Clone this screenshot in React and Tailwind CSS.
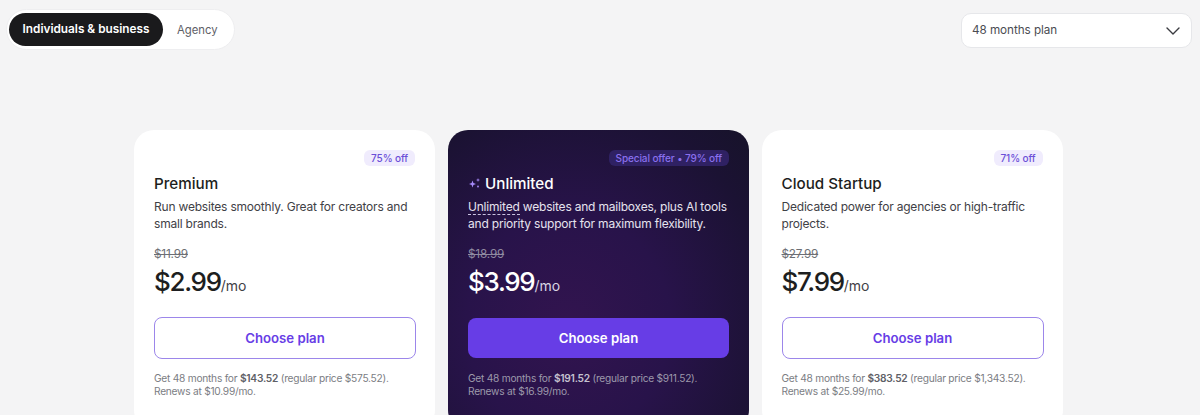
import React from "react";
import { ChevronDown } from "lucide-react";

const plans = [
  { name: "Premium", badge: "75% off", desc: "Run websites smoothly. Great for creators and small brands.", old: "$11.99", price: "$2.99", total: "$143.52", regular: "$575.52", renew: "$10.99" },
  { name: "Unlimited", badge: "Special offer • 79% off", featured: true, old: "$18.99", price: "$3.99", total: "$191.52", regular: "$911.52", renew: "$16.99" },
  { name: "Cloud Startup", badge: "71% off", desc: "Dedicated power for agencies or high-traffic projects.", old: "$27.99", price: "$7.99", total: "$383.52", regular: "$1,343.52", renew: "$25.99", tight: true },
];

function Sparkle() {
  return (
    <svg width="13" height="13" viewBox="0 0 13 13" className="mr-[4px] shrink-0" fill="#a78bfa">
      <path d="M4.5 3.5 L5.4 6.1 L8 7 L5.4 7.9 L4.5 10.5 L3.6 7.9 L1 7 L3.6 6.1 Z" />
      <path d="M10 1 L10.5 2.5 L12 3 L10.5 3.5 L10 5 L9.5 3.5 L8 3 L9.5 2.5 Z" />
      <circle cx="10" cy="9.5" r="0.9" />
    </svg>
  );
}

function Card({ p }) {
  const f = p.featured;
  return (
    <div className={`w-[301px] h-[300px] shrink-0 rounded-[20px] pt-5 ${p.tight ? "pl-[19.5px] pr-[20.5px]" : "px-5"} ${f ? "bg-[radial-gradient(ellipse_at_40%_65%,#32144f_0%,#28134a_40%,#1b1233_80%,#17132a_100%)]" : "bg-white"}`}>
      <div className="flex justify-end h-4">
        <span className={`h-4 rounded-[6px] px-[7px] text-[10px] leading-4 font-medium tracking-[-0.1px] ${f ? "bg-[#2f2163] text-[#8a70ee]" : "bg-[#f0ecfd] text-[#6b4fd8]"}`}>{p.badge}</span>
      </div>
      <div className={`mt-[8px] flex items-center h-[19px] text-[15.2px] font-medium leading-[19px] ${f ? "text-white" : "text-[#1d1e20]"}`}>
        {f && <Sparkle />}
        {p.name}
      </div>
      <p className={`mt-[5px] h-[34px] text-[12px] leading-[17px] tracking-[-0.2px] ${f ? "text-[#e6e3ee]" : "text-[#3f4146]"}`}>
        {f ? (
          <>
            <span className="border-b border-dashed border-[#c9c2e0]">Unlimited</span> websites and mailboxes, plus AI tools and priority support for maximum flexibility.
          </>
        ) : p.desc}
      </p>
      <div className={`mt-[14px] h-[16px] text-[11.8px] leading-4 line-through tracking-[-0.2px] ${f ? "text-[#8f8aa0]" : "text-[#6d6f75]"}`}>{p.old}</div>
      <div className="mt-[2px] flex items-baseline h-[36px] leading-[36px]">
        <span className={`text-[26px] font-medium tracking-[-1.3px] ${f ? "text-white" : "text-[#1d1e20]"}`}>{p.price}</span>
        <span className={`text-[14px] ${f ? "text-[#d8d5e2]" : "text-[#3f4146]"}`}>/mo</span>
      </div>
      <button className={`pt-[1px] text-[13.2px] font-semibold ${f ? "mt-[18px] w-[261px] h-[40px] mb-[1px] rounded-[8px] bg-[#673de6] text-white" : "mt-[17px] w-[262px] h-[42px] rounded-[8px] bg-white border border-[#9c86ea] text-[#673de6]"}`}>
        Choose plan
      </button>
      <p className={`mt-[13px] text-[10.2px] leading-[13px] tracking-[-0.25px] ${f ? "text-[#9d99ab]" : "text-[#7b7d83]"}`}>
        Get 48 months for <b className={`font-semibold ${f ? "text-[#c5c2d0]" : "text-[#5e6066]"}`}>{p.total}</b> (regular price {p.regular}).<br />
        Renews at {p.renew}/mo.
      </p>
    </div>
  );
}

export default function App() {
  return (
    <div className="h-[415px] overflow-hidden bg-[#f4f4f5] font-['Inter','Liberation_Sans',sans-serif]">
      <div className="flex items-start justify-between pl-[6px] pr-2 pt-[9px]">
        <div className="flex items-center h-[41px] w-[229px] rounded-full bg-white border border-[#eeeef0] pl-[2px]">
          <div className="flex items-center justify-center pt-[1px] h-[33px] w-[154px] rounded-full bg-[#1a1a1c] text-white text-[11.8px] font-semibold">Individuals &amp; business</div>
          <div className="pl-[14px] pt-[1px] text-[11.3px] text-[#5e6066]">Agency</div>
        </div>
        <div className="mt-1 flex items-center justify-between h-[35px] w-[231px] rounded-[10px] bg-white border border-[#e6e7ea] pl-[10px] pr-[6px] text-[11.7px] tracking-[-0.05px] text-[#4a4c52]">
          48 months plan
          <ChevronDown size={24} strokeWidth={1.4} className="text-[#3a3b40]" />
        </div>
      </div>
      <div className="mt-[80px] flex gap-[13px] pl-[134px]">
        {plans.map((p) => <Card key={p.name} p={p} />)}
      </div>
    </div>
  );
}
